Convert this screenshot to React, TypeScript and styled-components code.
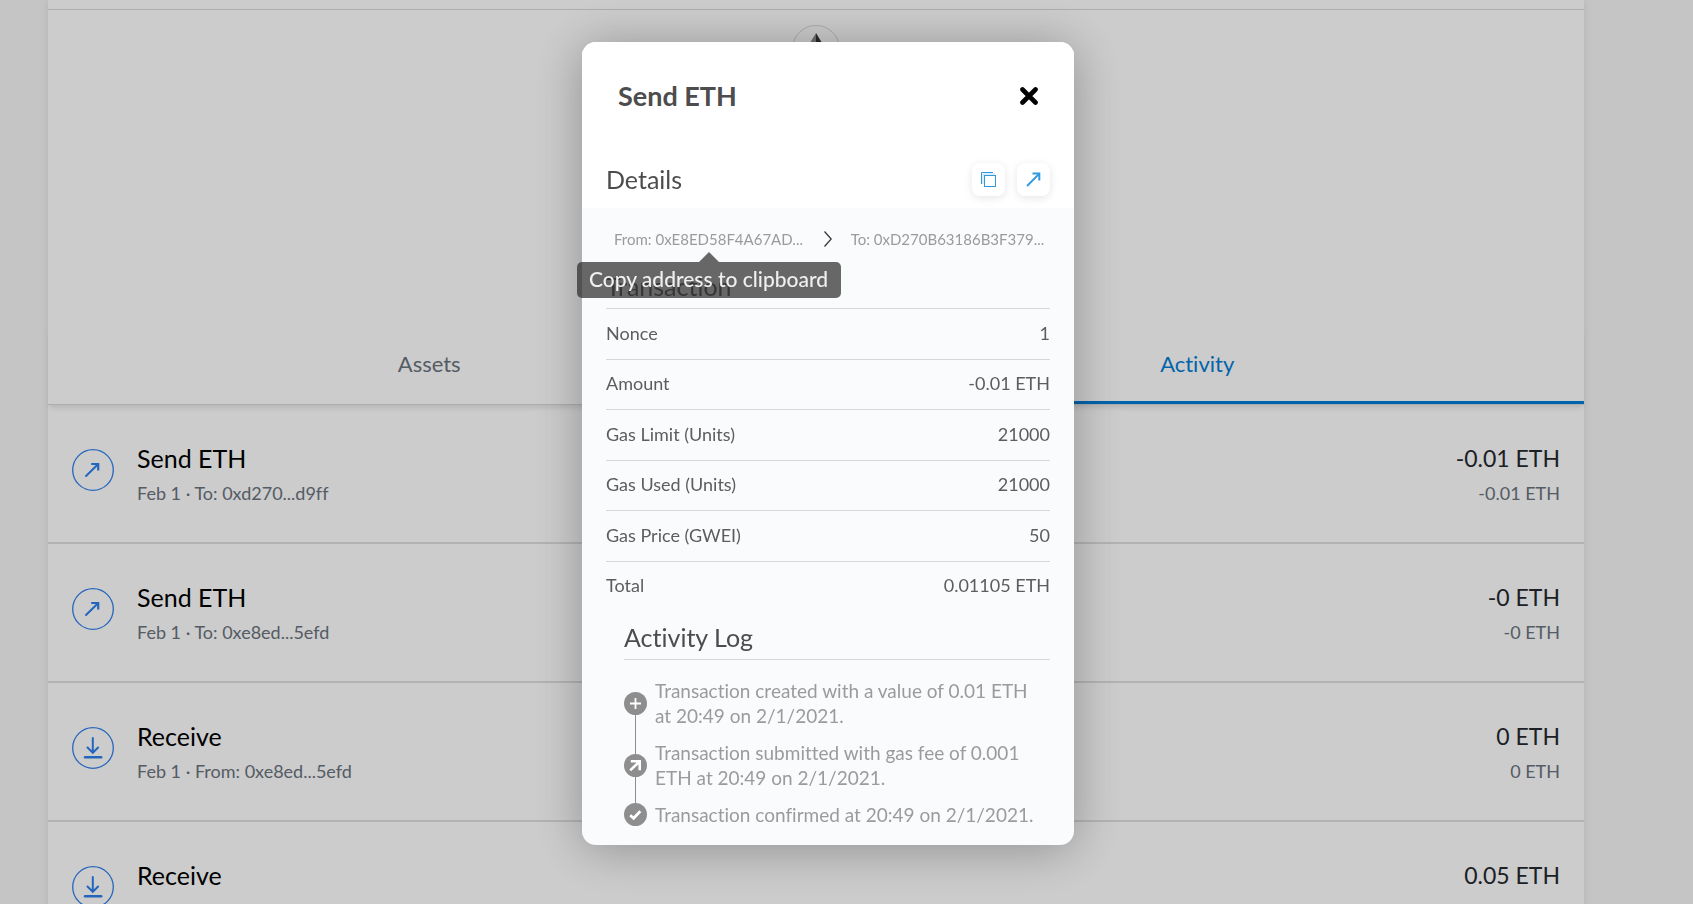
import React from 'react';
import styled, { createGlobalStyle } from 'styled-components';

const GlobalStyle = createGlobalStyle`
  *, *::before, *::after { box-sizing: border-box; }
  body {
    margin: 0;
    height: 100vh;
    overflow: hidden;
    background: #f7f7f7;
    font-family: Lato, "Liberation Sans", sans-serif;
    font-variant-ligatures: none;
  }
  button { font: inherit; border: 0; padding: 0; background: none; cursor: pointer; }
  h1, h2, h3, p, dl, dd, ol, ul { margin: 0; padding: 0; }
  ol, ul { list-style: none; }
`;

/* ---------- wallet page ---------- */

const Page = styled.main`
  height: 100vh;
  overflow: hidden;
  padding: 0 109px 0 48px;
`;

const Wallet = styled.div`
  display: flex;
  flex-direction: column;
  min-height: 100vh;
  background: #fff;
  box-shadow: 0 0 9px rgba(0, 0, 0, 0.1);
`;

const MenuBar = styled.header`
  height: 10px;
  border-bottom: 1px solid #d6d9dc;
`;

const Overview = styled.section`
  display: flex;
  justify-content: center;
  height: 315px;
  padding-top: 15px;
`;

const TokenBadge = styled.div`
  display: flex;
  align-items: center;
  justify-content: center;
  width: 48px;
  height: 48px;
  border: 1px solid #d6d9dc;
  border-radius: 50%;
`;

const Tabs = styled.nav`
  display: flex;
  border-bottom: 1px solid #d6d9dc;
  box-shadow: 0 5px 5px -2px rgba(0, 0, 0, 0.1);
`;

const Tab = styled.button<{ $active?: boolean }>`
  flex: 1 1 auto;
  height: 79px;
  border-bottom: 3px solid ${(p) => (p.$active ? '#037dd6' : 'transparent')};
  color: ${(p) => (p.$active ? '#037dd6' : '#6a737d')};
  font-size: 22px;
`;

const ListItem = styled.li`
  display: flex;
  height: 139px;
  padding: 37px 24px 0;
  border-bottom: 2px solid #e0e0e0;
`;

const ListIcon = styled.span`
  display: flex;
  flex: none;
  padding-top: 7px;
  margin-right: 23px;
`;

const ListText = styled.div`
  flex: 1;
`;

const ListAmounts = styled.div`
  text-align: right;
`;

const Primary = styled.p<{ $amount?: boolean }>`
  color: ${(p) => (p.$amount ? '#24292e' : '#000')};
  font-size: ${(p) => (p.$amount ? 23 : 25)}px;
  line-height: 32px;
`;

const Secondary = styled.p`
  margin-top: 6px;
  color: #6a737d;
  font-size: 18px;
  line-height: 26px;
`;

/* ---------- modal ---------- */

const Overlay = styled.div`
  position: fixed;
  inset: 0;
  display: flex;
  align-items: flex-start;
  justify-content: center;
  padding: 42px 37px 0 0;
  background: rgba(0, 0, 0, 0.2);
`;

const Modal = styled.div`
  width: 492px;
  padding-bottom: 18px;
  border-radius: 14px;
  background: #fafbfd;
  box-shadow: 0 4px 50px rgba(0, 0, 0, 0.3);
`;

const ModalTop = styled.div`
  border-radius: 14px 14px 0 0;
  background: #fff;
`;

const ModalHeader = styled.header`
  display: flex;
  align-items: center;
  justify-content: space-between;
  height: 108px;
  padding: 0 36px;
`;

const ModalTitle = styled.h1`
  color: #4d4d4d;
  font-size: 27px;
  line-height: 36px;
  font-weight: 700;
`;

const CloseButton = styled.button`
  display: flex;
`;

const DetailsBar = styled.div`
  display: flex;
  align-items: center;
  height: 58px;
  padding: 0 24px;
  gap: 12px;
`;

const SectionTitle = styled.h2`
  flex: 1;
  color: #4d4d4d;
  font-size: 25px;
  line-height: 32px;
  font-weight: 400;
`;

const RaisedButton = styled.button`
  display: flex;
  align-items: center;
  justify-content: center;
  width: 33px;
  height: 33px;
  border-radius: 8px;
  background: #fff;
  box-shadow: 0 2px 8px rgba(0, 0, 0, 0.1);
`;

const Parties = styled.div`
  display: grid;
  grid-template-columns: 1fr 34px 1fr;
  align-items: center;
  justify-items: center;
  height: 64px;
  padding: 0 24px 2px;
`;

const Address = styled.button`
  position: relative;
  color: #9b9b9b;
  font-size: 15px;
  line-height: 20px;
  white-space: nowrap;
`;

const Tooltip = styled.span`
  position: absolute;
  top: 33px;
  left: 50%;
  width: 264px;
  padding-bottom: 2px;
  border-radius: 5px;
  background: rgba(46, 46, 46, 0.72);
  color: #f0f0f0;
  font-size: 21px;
  font-weight: 500;
  line-height: 34px;
  text-align: center;
  transform: translateX(-50%);

  &::before {
    content: '';
    position: absolute;
    left: 50%;
    bottom: 100%;
    margin-left: -10px;
    border: 10px solid transparent;
    border-top: 0;
    border-bottom-color: rgba(46, 46, 46, 0.72);
  }
`;

const Breakdown = styled.section`
  padding: 0 24px;
`;

const SectionHeading = styled(SectionTitle)`
  height: 37px;
  border-bottom: 1px solid #d6d9dc;
  line-height: 28px;
`;

const Rows = styled.dl`
  display: grid;
  grid-auto-rows: 1fr;
  min-height: 303px;
`;

const Row = styled.div`
  display: flex;
  align-items: center;
  justify-content: space-between;
  padding-bottom: 1px;
  border-bottom: 1px solid #d6d9dc;
  color: #5d5d5d;
  font-size: 18px;
  line-height: 25px;

  &:last-child { border-bottom-color: transparent; }
`;

const Log = styled.section`
  padding: 11px 24px 0 42px;
`;

const LogList = styled.ol`
  display: flex;
  flex-direction: column;
  gap: 12px;
  padding-top: 18px;
`;

const LogItem = styled.li`
  position: relative;
  display: flex;
  align-items: center;
  gap: 8px;
  padding-right: 12px;
  color: #9b9b9b;
  font-size: 19px;
  line-height: 25px;

  svg { position: relative; z-index: 1; flex: none; }

  & + &::before {
    content: '';
    position: absolute;
    left: 11px;
    bottom: 50%;
    width: 1px;
    height: 62px;
    background: #8e8e8e;
  }
`;

/* ---------- icons ---------- */

const SendIcon = () => (
  <svg width="42" height="42" viewBox="0 0 42 42" fill="none" stroke="#2f80ed" aria-hidden="true">
    <circle cx="21" cy="21" r="20.3" strokeWidth="1.3" />
    <path d="M14 27 L26 15.3" strokeWidth="2" strokeLinecap="round" />
    <path d="M19.2 15 H26.2 V21.6" strokeWidth="2.2" />
  </svg>
);

const ReceiveIcon = () => (
  <svg width="42" height="42" viewBox="0 0 42 42" fill="none" stroke="#2f80ed" strokeLinecap="round" aria-hidden="true">
    <circle cx="21" cy="21" r="20.3" strokeWidth="1.3" />
    <path d="M20.8 11 V25.5 M15.5 20.5 L20.8 25.8 L26.1 20.5" strokeWidth="2" />
    <path d="M13 30.3 H29.2" strokeWidth="2.4" />
  </svg>
);

const EthIcon = () => (
  <svg width="20" height="32" viewBox="0 0 20 32" aria-hidden="true">
    <path d="M10 0 L0 16.5 L10 22.3 Z" fill="#8a8a8a" />
    <path d="M10 0 L20 16.5 L10 22.3 Z" fill="#343434" />
    <path d="M0 18.5 L10 32 V24.3 Z" fill="#8a8a8a" />
    <path d="M20 18.5 L10 32 V24.3 Z" fill="#343434" />
  </svg>
);

const CloseIcon = () => (
  <svg width="18" height="18" viewBox="0 0 18 18" stroke="#000" strokeWidth="4.6" strokeLinecap="round" aria-hidden="true">
    <path d="M2.5 2.5 L15.5 15.5 M15.5 2.5 L2.5 15.5" />
  </svg>
);

const CopyIcon = () => (
  <svg width="15" height="15" viewBox="0 0 15 15" fill="none" stroke="#3098dc" aria-hidden="true">
    <path d="M0.5 12 V0.5 H12" />
    <path d="M2 12 V2 H14" stroke="#bcdcf3" />
    <rect x="3.5" y="3.5" width="11" height="11" fill="#fff" />
  </svg>
);

const OpenIcon = () => (
  <svg width="15" height="15" viewBox="0 0 15 15" fill="none" stroke="#3098dc" aria-hidden="true">
    <path d="M1 14 L13 2" strokeWidth="1.8" />
    <path d="M6.5 1.6 H13.3 V8.4" strokeWidth="2" />
  </svg>
);

const ChevronIcon = () => (
  <svg width="8" height="16" viewBox="0 0 8 16" fill="none" stroke="#333" aria-hidden="true">
    <path d="M0.5 0.5 L7.2 8 L0.5 15.5" strokeWidth="1.2" />
  </svg>
);

const glyphs = {
  created: <path d="M6 11.5 H17 M11.5 6 V17" strokeWidth="1.8" />,
  submitted: <path d="M6.2 16.4 L14.5 8.5 M6.8 7.3 H15.7 V16.2" strokeWidth="2.6" />,
  confirmed: <path d="M6.2 12.2 L9.6 15.2 L16.3 8.2" strokeWidth="2.8" />,
};

const LogIcon = ({ kind }: { kind: keyof typeof glyphs }) => (
  <svg width="23" height="23" viewBox="0 0 23 23" fill="none" stroke="#fff" aria-hidden="true">
    <circle cx="11.5" cy="11.5" r="11.5" fill="#8e8e8e" stroke="none" />
    {glyphs[kind]}
  </svg>
);

/* ---------- data ---------- */

const activity = [
  { kind: 'send', title: 'Send ETH', detail: 'Feb 1 · To: 0xd270...d9ff', amount: '-0.01 ETH' },
  { kind: 'send', title: 'Send ETH', detail: 'Feb 1 · To: 0xe8ed...5efd', amount: '-0 ETH' },
  { kind: 'receive', title: 'Receive', detail: 'Feb 1 · From: 0xe8ed...5efd', amount: '0 ETH' },
  { kind: 'receive', title: 'Receive', detail: 'Feb 1 · From: 0xe8ed...5efd', amount: '0.05 ETH' },
];

const breakdown = [
  ['Nonce', '1'],
  ['Amount', '-0.01 ETH'],
  ['Gas Limit (Units)', '21000'],
  ['Gas Used (Units)', '21000'],
  ['Gas Price (GWEI)', '50'],
  ['Total', '0.01105 ETH'],
];

const log: { kind: keyof typeof glyphs; text: string }[] = [
  { kind: 'created', text: 'Transaction created with a value of 0.01 ETH at 20:49 on 2/1/2021.' },
  { kind: 'submitted', text: 'Transaction submitted with gas fee of 0.001 ETH at 20:49 on 2/1/2021.' },
  { kind: 'confirmed', text: 'Transaction confirmed at 20:49 on 2/1/2021.' },
];

export default function App() {
  return (
    <>
      <GlobalStyle />
      <Page>
        <Wallet>
          <MenuBar />
          <Overview>
            <TokenBadge><EthIcon /></TokenBadge>
          </Overview>
          <Tabs>
            <Tab type="button">Assets</Tab>
            <Tab type="button" $active>Activity</Tab>
          </Tabs>
          <ul>
            {activity.map((item, i) => (
              <ListItem key={i}>
                <ListIcon>{item.kind === 'send' ? <SendIcon /> : <ReceiveIcon />}</ListIcon>
                <ListText>
                  <Primary>{item.title}</Primary>
                  <Secondary>{item.detail}</Secondary>
                </ListText>
                <ListAmounts>
                  <Primary $amount>{item.amount}</Primary>
                  <Secondary>{item.amount}</Secondary>
                </ListAmounts>
              </ListItem>
            ))}
          </ul>
        </Wallet>
      </Page>

      <Overlay>
        <Modal role="dialog" aria-modal="true" aria-labelledby="modal-title">
          <ModalTop>
            <ModalHeader>
              <ModalTitle id="modal-title">Send ETH</ModalTitle>
              <CloseButton type="button" aria-label="Close"><CloseIcon /></CloseButton>
            </ModalHeader>
            <DetailsBar>
              <SectionTitle>Details</SectionTitle>
              <RaisedButton type="button" aria-label="Copy transaction ID"><CopyIcon /></RaisedButton>
              <RaisedButton type="button" aria-label="View on block explorer"><OpenIcon /></RaisedButton>
            </DetailsBar>
          </ModalTop>

          <Parties>
            <Address type="button">
              From: 0xE8ED58F4A67AD...
              <Tooltip role="tooltip">Copy address to clipboard</Tooltip>
            </Address>
            <ChevronIcon />
            <Address type="button">To: 0xD270B63186B3F379...</Address>
          </Parties>

          <Breakdown>
            <SectionHeading>Transaction</SectionHeading>
            <Rows>
              {breakdown.map(([label, value]) => (
                <Row key={label}>
                  <dt>{label}</dt>
                  <dd>{value}</dd>
                </Row>
              ))}
            </Rows>
          </Breakdown>

          <Log>
            <SectionHeading>Activity Log</SectionHeading>
            <LogList>
              {log.map((entry) => (
                <LogItem key={entry.kind}>
                  <LogIcon kind={entry.kind} />
                  <span>{entry.text}</span>
                </LogItem>
              ))}
            </LogList>
          </Log>
        </Modal>
      </Overlay>
    </>
  );
}
